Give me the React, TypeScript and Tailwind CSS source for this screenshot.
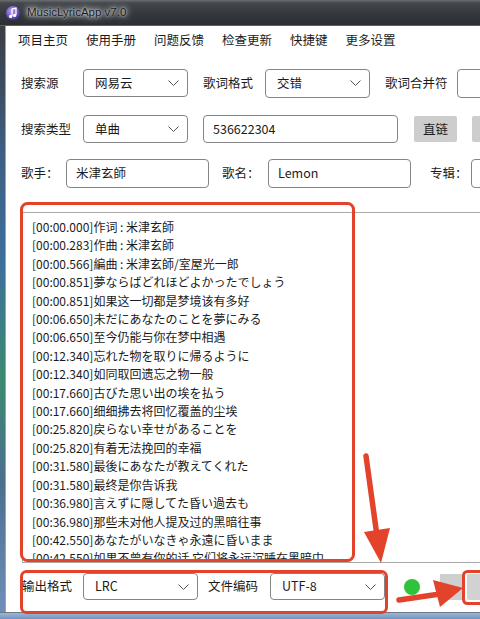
import React from "react";

const lyrics = [
  "[00:00.000]作词 : 米津玄師",
  "[00:00.283]作曲 : 米津玄師",
  "[00:00.566]編曲 : 米津玄師/室屋光一郎",
  "[00:00.851]夢ならばどれほどよかったでしょう",
  "[00:00.851]如果这一切都是梦境该有多好",
  "[00:06.650]未だにあなたのことを夢にみる",
  "[00:06.650]至今仍能与你在梦中相遇",
  "[00:12.340]忘れた物を取りに帰るように",
  "[00:12.340]如同取回遗忘之物一般",
  "[00:17.660]古びた思い出の埃を払う",
  "[00:17.660]细细拂去将回忆覆盖的尘埃",
  "[00:25.820]戻らない幸せがあることを",
  "[00:25.820]有着无法挽回的幸福",
  "[00:31.580]最後にあなたが教えてくれた",
  "[00:31.580]最终是你告诉我",
  "[00:36.980]言えずに隠してた昏い過去も",
  "[00:36.980]那些未对他人提及过的黑暗往事",
  "[00:42.550]あなたがいなきゃ永遠に昏いまま",
  "[00:42.550]如果不曾有你的话 它们将永远沉睡在黑暗中",
];

const menu = ["项目主页", "使用手册", "问题反馈", "检查更新", "快捷键", "更多设置"];

function Chevron() {
  return (
    <svg width="11" height="6" viewBox="0 0 11 6" className="shrink-0">
      <path d="M0.5 0.5 L5.5 5.5 L10.5 0.5" fill="none" stroke="#555" strokeWidth="1" />
    </svg>
  );
}

function Select({ value, className }: { value: string; className: string }) {
  return (
    <div
      className={`${className} shrink-0 flex items-center justify-between pl-[11px] pr-[8px] border border-[#858585] rounded-[4px] bg-white text-[12.5px] text-[#1b1b1b]`}
    >
      <span>{value}</span>
      <Chevron />
    </div>
  );
}

function Field({ value, className }: { value?: string; className: string }) {
  return (
    <div
      className={`${className} shrink-0 flex items-center pl-[9px] border border-[#858585] rounded-[4px] bg-white text-[12.5px] text-[#1b1b1b]`}
    >
      {value}
    </div>
  );
}

function Label({ text, className }: { text: string; className: string }) {
  return <span className={`${className} shrink-0 text-[12.5px] text-[#1b1b1b]`}>{text}</span>;
}

export default function App() {
  return (
    <div className="relative w-[480px] h-[619px] overflow-hidden bg-white flex flex-col font-['Noto_Sans_CJK_SC','Noto_Sans',sans-serif] whitespace-nowrap">
      {/* title bar */}
      <div className="h-[26px] shrink-0 flex items-center bg-[linear-gradient(180deg,#6a6e72_0%,#44484c_12%,#33373b_60%,#2b2e32_100%)] border-b border-[#5d6166]">
        <svg width="16" height="16" viewBox="0 0 16 16" className="ml-[5px] mt-[1px]">
          <defs>
            <radialGradient id="ic" cx="0.4" cy="0.35" r="0.7">
              <stop offset="0" stopColor="#b9a6ef" />
              <stop offset="0.6" stopColor="#6f55c9" />
              <stop offset="1" stopColor="#3f2d8e" />
            </radialGradient>
          </defs>
          <circle cx="8" cy="8" r="7" fill="url(#ic)" />
          <path d="M7 4 L11 3 L11 10" fill="none" stroke="#fff" strokeWidth="1.3" />
          <circle cx="9.6" cy="10.4" r="1.6" fill="#fff" />
          <path d="M7 4 L7 11" stroke="#fff" strokeWidth="1.3" />
          <circle cx="5.6" cy="11.4" r="1.6" fill="#fff" />
        </svg>
        <span className="ml-[6px] text-[11.5px] text-[#161616] font-['Liberation_Sans',sans-serif] [text-shadow:0_0_8px_rgba(255,255,255,0.95),0_0_5px_rgba(255,255,255,0.9),0_0_2px_rgba(255,255,255,0.8)]">
          MusicLyricApp v7.0
        </span>
      </div>

      <div className="flex-1 flex min-h-0">
        {/* left window frame */}
        <div className="w-[6px] shrink-0 bg-[linear-gradient(180deg,#3a3d42_0%,#3f5d80_20%,#3c6f9c_40%,#3b8a70_60%,#4b6f8f_78%,#6f8fb8_100%)] border-r border-[#9aa4ae]" />

        {/* window content */}
        <div className="flex-1 min-w-0 overflow-hidden flex flex-col bg-white">
          {/* menu bar */}
          <div className="h-[28px] shrink-0 flex items-center pl-[12px] gap-[18px] text-[12.5px] text-[#1b1b1b]">
            {menu.map((m) => (
              <span key={m} className="shrink-0">
                {m}
              </span>
            ))}
          </div>

          {/* search source row */}
          <div className="h-[28px] mt-[15px] shrink-0 flex items-center pl-[15px]">
            <Label text="搜索源" className="w-[62px]" />
            <Select value="网易云" className="w-[105px] h-[28px]" />
            <Label text="歌词格式" className="w-[62px] ml-[15px]" />
            <Select value="交错" className="w-[105px] h-[29px]" />
            <Label text="歌词合并符" className="w-[72px] ml-[15px]" />
            <Field className="w-[100px] h-[29px]" />
          </div>

          {/* search type row */}
          <div className="h-[28px] mt-[18px] shrink-0 flex items-center pl-[15px]">
            <Label text="搜索类型" className="w-[62px]" />
            <Select value="单曲" className="w-[105px] h-[28px]" />
            <Field value="536622304" className="w-[195px] h-[28px] ml-[15px]" />
            <div className="w-[43px] h-[26px] ml-[16px] shrink-0 flex items-center justify-center bg-[#cdcdcd] rounded-[2px] text-[12.5px] text-[#1b1b1b]">
              直链
            </div>
            <div className="w-[60px] h-[26px] ml-[15px] shrink-0 bg-[#cdcdcd] rounded-[2px]" />
          </div>

          {/* song info row */}
          <div className="h-[29px] mt-[16px] shrink-0 flex items-center pl-[15px]">
            <Label text="歌手：" className="w-[45px]" />
            <Field value="米津玄師" className="w-[143px] h-[29px]" />
            <Label text="歌名：" className="w-[46px] ml-[13px]" />
            <Field value="Lemon" className="w-[143px] h-[29px]" />
            <Label text="专辑：" className="w-[41px] ml-[19px]" />
            <Field className="w-[100px] h-[29px]" />
          </div>

          {/* lyric output */}
          <div className="h-[351px] mt-[24px] ml-[16px] shrink-0 w-[480px] border border-[#a9a9a9] bg-white overflow-hidden pl-[9px] pt-[5px] text-[12px] leading-[18.4px] text-[#1b1b1b]">
            {lyrics.map((l, i) => (
              <div key={i}>{l}</div>
            ))}
          </div>

          {/* output options row */}
          <div className="h-[27px] mt-[10px] shrink-0 flex items-center pl-[16px]">
            <Label text="输出格式" className="w-[61px]" />
            <Select value="LRC" className="w-[115px] h-[27px]" />
            <Label text="文件编码" className="w-[62px] ml-[10px]" />
            <Select value="UTF-8" className="w-[115px] h-[27px]" />
            <div className="w-[16px] h-[16px] ml-[19px] shrink-0 rounded-full bg-[#2fc23b]" />
            <div className="w-[22px] h-[26px] ml-[20px] shrink-0 bg-[#cfcfcf]" />
            <div className="w-[60px] h-[26px] ml-[5px] shrink-0 bg-[#d2d2d2] rounded-[2px]" />
          </div>
        </div>
      </div>

      {/* bottom window frame */}
      <div className="h-[7px] shrink-0 border-t border-[#6d7782] bg-[linear-gradient(180deg,#9fb6d2_0%,#6f95c4_100%)]" />

      {/* callout marks */}
      <svg className="absolute inset-0 pointer-events-none" width="480" height="619" viewBox="0 0 480 619">
        <rect x="21.5" y="203.5" width="332" height="357" rx="6" fill="none" stroke="#e3432b" strokeWidth="3" />
        <rect x="21.5" y="571.5" width="365" height="41" rx="5" fill="none" stroke="#e3432b" strokeWidth="3" />
        <rect x="463.5" y="571.5" width="40" height="32" rx="4" fill="none" stroke="#e3432b" strokeWidth="3" />
        <line x1="366" y1="456" x2="377" y2="536" stroke="#e3432b" strokeWidth="5.5" strokeLinecap="round" />
        <polygon points="364,532 390,528 381,563" fill="#e3432b" />
        <line x1="399" y1="600" x2="440" y2="594" stroke="#e3432b" strokeWidth="5.5" strokeLinecap="round" />
        <polygon points="433,580 440,607 463,588" fill="#e3432b" />
      </svg>
    </div>
  );
}
